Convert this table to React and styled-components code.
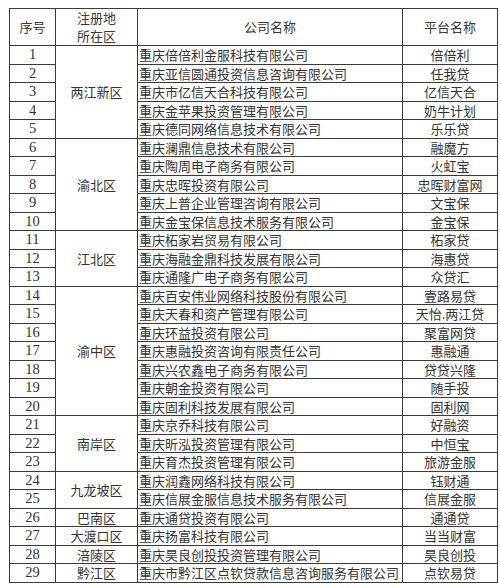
import React from 'react';
import styled, { createGlobalStyle } from 'styled-components';

const GlobalStyle = createGlobalStyle`
  html, body {
    margin: 0;
    padding: 0;
    background: #fff;
  }
`;

const Page = styled.div`
  padding: 8px 0 0 9px;
`;

const Table = styled.table`
  border-collapse: collapse;
  table-layout: fixed;
  width: 488px;
  color: #333;
  font-family: "Noto Sans CJK SC", "Noto Sans", sans-serif;
  font-size: 13px;
`;

const HeadCell = styled.th`
  border: 1px solid #3a3a3a;
  font-weight: normal;
  height: 35px;
  padding: 0;
  line-height: 18px;
  text-align: center;
  color: #3a3a3a;
`;

const Row = styled.tr`
  height: 18.5px;
`;

const Cell = styled.td`
  border: 1px solid #3a3a3a;
  padding: 0 ${p => (p.$left ? '1px' : '0')};
  line-height: 17px;
  text-align: ${p => (p.$left ? 'left' : 'center')};
  white-space: nowrap;
  overflow: hidden;
`;

const NumCell = styled(Cell)`
  font-family: "Liberation Serif", "DejaVu Serif", serif;
  font-size: 14.5px;
`;

const rows = [
  ['重庆倍倍利金服科技有限公司', '倍倍利'],
  ['重庆亚信圆通投资信息咨询有限公司', '任我贷'],
  ['重庆市亿信天合科技有限公司', '亿信天合'],
  ['重庆金苹果投资管理有限公司', '奶牛计划'],
  ['重庆德同网络信息技术有限公司', '乐乐贷'],
  ['重庆澜鼎信息技术有限公司', '融魔方'],
  ['重庆陶周电子商务有限公司', '火虹宝'],
  ['重庆忠晖投资有限公司', '忠晖财富网'],
  ['重庆上普企业管理咨询有限公司', '文宝保'],
  ['重庆金宝保信息技术服务有限公司', '金宝保'],
  ['重庆柘家岩贸易有限公司', '柘家贷'],
  ['重庆海融金鼎科技发展有限公司', '海惠贷'],
  ['重庆通隆广电子商务有限公司', '众贷汇'],
  ['重庆百安伟业网络科技股份有限公司', '壹路易贷'],
  ['重庆天春和资产管理有限公司', '天怡.两江贷'],
  ['重庆环益投资有限公司', '聚富网贷'],
  ['重庆惠融投资咨询有限责任公司', '惠融通'],
  ['重庆兴农鑫电子商务有限公司', '贷贷兴隆'],
  ['重庆朝金投资有限公司', '随手投'],
  ['重庆固利科技发展有限公司', '固利网'],
  ['重庆京乔科技有限公司', '好融资'],
  ['重庆昕泓投资管理有限公司', '中恒宝'],
  ['重庆育杰投资管理有限公司', '旅游金服'],
  ['重庆润鑫网络科技有限公司', '钰财通'],
  ['重庆信展金服信息技术服务有限公司', '信展金服'],
  ['重庆通贷投资有限公司', '通通贷'],
  ['重庆扬富科技有限公司', '当当财富'],
  ['重庆昊良创投投资管理有限公司', '昊良创投'],
  ['重庆市黔江区点钦贷款信息咨询服务有限公司', '点钦易贷'],
];

// region name -> first row index and span
const regions = {
  0: ['两江新区', 5],
  5: ['渝北区', 5],
  10: ['江北区', 3],
  13: ['渝中区', 7],
  20: ['南岸区', 3],
  23: ['九龙坡区', 2],
  25: ['巴南区', 1],
  26: ['大渡口区', 1],
  27: ['涪陵区', 1],
  28: ['黔江区', 1],
};

export default function App() {
  return (
    <Page>
      <GlobalStyle />
      <Table>
        <colgroup>
          <col style={{ width: 46 }} />
          <col style={{ width: 82 }} />
          <col style={{ width: 265 }} />
          <col style={{ width: 95 }} />
        </colgroup>
        <thead>
          <tr>
            <HeadCell>序号</HeadCell>
            <HeadCell>注册地<br />所在区</HeadCell>
            <HeadCell>公司名称</HeadCell>
            <HeadCell>平台名称</HeadCell>
          </tr>
        </thead>
        <tbody>
          {rows.map(([company, platform], i) => (
            <Row key={i}>
              <NumCell>{i + 1}</NumCell>
              {regions[i] && <Cell rowSpan={regions[i][1]}>{regions[i][0]}</Cell>}
              <Cell $left>{company}</Cell>
              <Cell>{platform}</Cell>
            </Row>
          ))}
        </tbody>
      </Table>
    </Page>
  );
}
